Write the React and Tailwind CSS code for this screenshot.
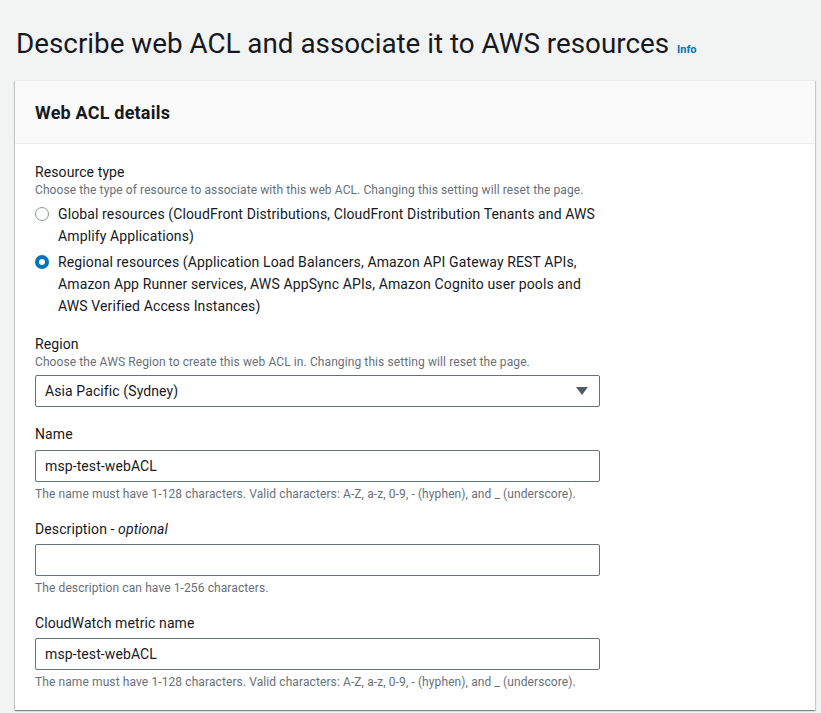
const font = { fontFamily: "Roboto, 'Liberation Sans', sans-serif" };

const Label = ({ children }) => (
	<div className="text-[14px] leading-[20px] tracking-[0.1px] text-[#16191f]">{children}</div>
);

const Hint = ({ children }) => (
	<div className="text-[12px] leading-[16px] tracking-[0.1px] text-[#687078]">{children}</div>
);

const Radio = ({ checked, children }) => (
	<label className="flex items-start gap-[9px]">
		<span className="mt-[4px] flex h-[14px] w-[14px] shrink-0 items-center justify-center">
			{checked ? (
				<span className="flex h-[14px] w-[14px] items-center justify-center rounded-full bg-[#0073bb]">
					<span className="h-[6px] w-[6px] rounded-full bg-white" />
				</span>
			) : (
				<span className="h-[14px] w-[14px] rounded-full border border-[#879596] bg-white" />
			)}
		</span>
		<span className="text-[14px] leading-[22px] tracking-[0.12px] text-[#16191f]">{children}</span>
	</label>
);

const TextBox = ({ value }) => (
	<div className="flex h-[32px] w-[565px] items-center rounded-[2px] border border-[#687078] bg-white px-[9px] text-[14px] tracking-[0.1px] text-[#16191f]">
		{value}
	</div>
);

const App = () => {
	return (
		<div style={font} className="min-h-[713px] w-full bg-[#f2f3f3] px-[15px] pt-[26px]">
			<div className="flex items-baseline gap-[8px] pl-[1px]">
				<h1 className="text-[27.8px] leading-[36px] font-normal text-[#16191f]">
					Describe web ACL and associate it to AWS resources
				</h1>
				<span className="text-[11px] font-bold text-[#0073bb]">Info</span>
			</div>

			<div className="mt-[18px] w-[800px] border-t border-[#eaeded] bg-white shadow-[0_1px_1px_0_rgba(0,28,36,0.3),1px_1px_1px_0_rgba(0,28,36,0.15),-1px_1px_1px_0_rgba(0,28,36,0.15)]">
				<div className="flex h-[63px] items-center border-b border-[#eaeded] bg-[#fafafa] px-[20px]">
					<h2 className="text-[18px] font-bold tracking-[0.2px] text-[#16191f]">Web ACL details</h2>
				</div>

				<div className="flex flex-col gap-[17px] px-[20px] pt-[18px] pb-[20px]">
					<div className="flex flex-col">
						<Label>Resource type</Label>
						<Hint>Choose the type of resource to associate with this web ACL. Changing this setting will reset the page.</Hint>
						<div className="mt-[5px] flex w-[565px] flex-col gap-[4px]">
							<Radio>
								Global resources (CloudFront Distributions, CloudFront Distribution Tenants and AWS Amplify Applications)
							</Radio>
							<Radio checked>
								Regional resources (Application Load Balancers, Amazon API Gateway REST APIs, Amazon App Runner services, AWS AppSync APIs, Amazon Cognito user pools and AWS Verified Access Instances)
							</Radio>
						</div>
					</div>

					<div className="flex flex-col">
						<Label>Region</Label>
						<Hint>Choose the AWS Region to create this web ACL in. Changing this setting will reset the page.</Hint>
						<div className="mt-[5px] flex h-[32px] w-[565px] items-center justify-between rounded-[2px] border border-[#687078] bg-white pr-[11px] pl-[9px] text-[14px] tracking-[0.1px] text-[#16191f]">
							<span>Asia Pacific (Sydney)</span>
							<svg width="12" height="8" viewBox="0 0 12 8">
								<path d="M0 0h12L6 8z" fill="#545b64" />
							</svg>
						</div>
					</div>

					<div className="flex flex-col">
						<Label>Name</Label>
						<div className="mt-[6px]">
							<TextBox value="msp-test-webACL" />
						</div>
						<div className="mt-[4px]">
							<Hint>The name must have 1-128 characters. Valid characters: A-Z, a-z, 0-9, - (hyphen), and _ (underscore).</Hint>
						</div>
					</div>

					<div className="flex flex-col">
						<Label>
							Description - <i>optional</i>
						</Label>
						<div className="mt-[5px]">
							<TextBox value="" />
						</div>
						<div className="mt-[4px]">
							<Hint>The description can have 1-256 characters.</Hint>
						</div>
					</div>

					<div className="flex flex-col">
						<Label>CloudWatch metric name</Label>
						<div className="mt-[5px]">
							<TextBox value="msp-test-webACL" />
						</div>
						<div className="mt-[4px]">
							<Hint>The name must have 1-128 characters. Valid characters: A-Z, a-z, 0-9, - (hyphen), and _ (underscore).</Hint>
						</div>
					</div>
				</div>
			</div>
		</div>
	);
};

export default App;
